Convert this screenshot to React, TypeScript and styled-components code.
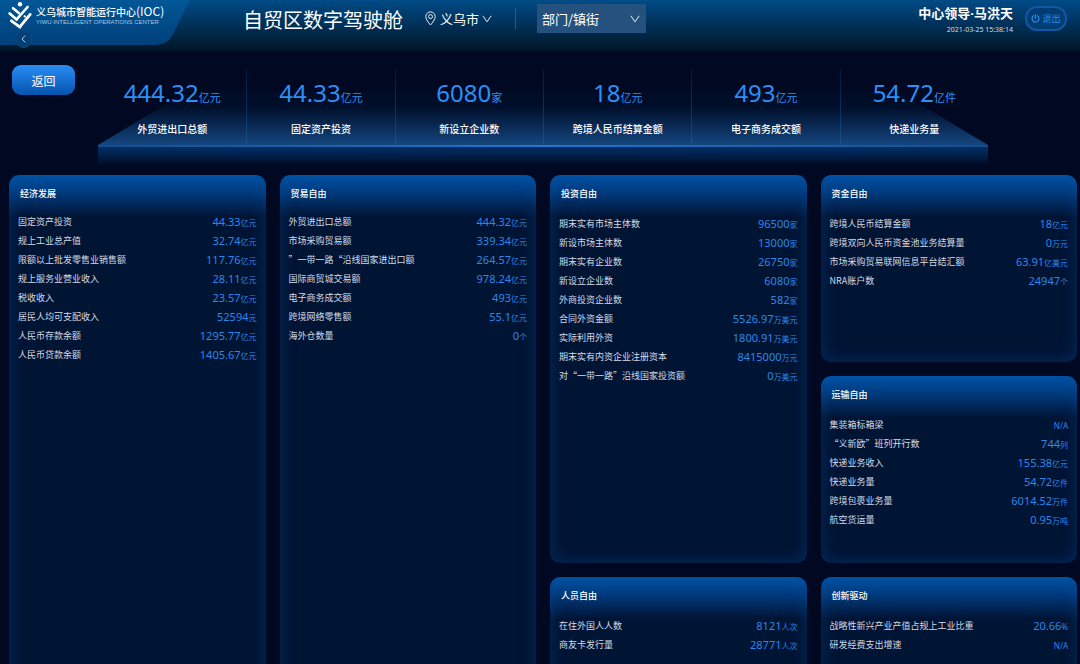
import React from 'react';
import styled, { createGlobalStyle, css } from 'styled-components';

const cjk = '"Noto Sans CJK SC", "Noto Sans", sans-serif';
const digits = '"Noto Sans", "Noto Sans CJK SC", sans-serif';

const GlobalStyle = createGlobalStyle`
  *, *::before, *::after { box-sizing: border-box; }
  body { margin: 0; background: #000822; color: #fff; font-family: ${cjk}; }
  h1, h2, p, dl, dd, dt { margin: 0; font-weight: 400; }
  button, select { font-family: inherit; color: inherit; }
`;

const Page = styled.div`
  height: 100vh;
  overflow: hidden;
  display: flex;
  flex-direction: column;
`;

const Header = styled.header`
  flex: none;
  height: 51px;
  display: flex;
  align-items: flex-start;
  padding-right: 13px;
  background: linear-gradient(#004b86, #003057 50%, #001626);
`;

const Brand = styled.div`
  position: relative;
  flex: none;
  width: 190px;
  height: 51px;
  margin-right: 53px;
`;

const BrandTab = styled.div`
  display: flex;
  align-items: flex-start;
  gap: 4px;
  height: 45px;
  padding: 2px 0 0 8px;
  background: linear-gradient(#005797, #00407a);
  clip-path: path('M0 0H190L173 34Q168 45 156 45H0Z');
`;

const BrandText = styled.div`
  padding-top: 2px;
  white-space: nowrap;
`;

const BrandName = styled.p`
  font-size: 10px;
  font-weight: 500;
  line-height: 14px;
  span { font-size: 12px; font-weight: 400; }
`;

const BrandSub = styled.p`
  font-family: "Liberation Sans", sans-serif;
  font-size: 6px;
  line-height: 7px;
  color: #a9c6e2;
`;

const CollapseButton = styled.button`
  position: absolute;
  left: 15px;
  top: 30px;
  width: 17px;
  height: 18px;
  padding: 0;
  display: grid;
  place-items: center;
  border: 1px solid #0a4c86;
  border-radius: 50%;
  background: #043f76;
`;

const Title = styled.h1`
  flex: none;
  font-size: 20px;
  line-height: 40px;
  margin-right: 22px;
`;

const Location = styled.label`
  display: flex;
  align-items: center;
  gap: 4px;
  height: 37px;
`;

const SelectWrap = styled.span<{ $filled?: boolean }>`
  display: flex;
  align-items: center;
  position: relative;
  width: ${(p) => (p.$filled ? '109px' : '52px')};
  height: 29px;
  margin-top: ${(p) => (p.$filled ? '4px' : '0')};
  ${(p) => p.$filled && css`background: #25517f;`}
  svg {
    position: absolute;
    right: ${(p) => (p.$filled ? '6px' : '0')};
    pointer-events: none;
  }
`;

const Select = styled.select<{ $filled?: boolean }>`
  appearance: none;
  width: 100%;
  height: 100%;
  padding: 0 0 0 ${(p) => (p.$filled ? '5px' : '0')};
  border: 0;
  background: transparent;
  font-size: 13px;
  option { color: #000; }
`;

const Divider = styled.span`
  width: 1px;
  height: 21px;
  margin: 8px 21px 0 23px;
  background: #2b587f;
`;

const User = styled.div`
  margin-left: auto;
  padding-top: 4px;
  text-align: right;
  white-space: nowrap;
`;

const UserName = styled.p`
  font-family: ${digits};
  font-size: 13px;
  font-weight: 700;
  line-height: 19px;
`;

const Clock = styled.time`
  display: block;
  font-family: ${digits};
  font-size: 7px;
  line-height: 14px;
  color: #d3dfea;
`;

const LogoutButton = styled.button`
  display: flex;
  align-items: center;
  justify-content: center;
  gap: 2px;
  width: 42px;
  height: 25px;
  margin: 6px 0 0 12px;
  padding: 0;
  border: 2px solid #1157a4;
  border-radius: 12px;
  background: #003d73;
  color: #2b8cf0;
  font-size: 9px;
`;

const Summary = styled.section`
  flex: none;
  display: flex;
  align-items: flex-start;
  height: 124px;
  padding: 14px 92px 0 12px;
`;

const ReturnButton = styled.button`
  flex: none;
  width: 63px;
  height: 30px;
  margin-right: 23px;
  padding: 0;
  border: 0;
  border-radius: 9px;
  background: linear-gradient(#2a8df5, #0453ae);
  font-size: 12px;
`;

const Stage = styled.div`
  flex: 1;
  padding-top: 4px;
`;

const Deck = styled.div`
  position: relative;
  height: 76px;
  &::before {
    content: '';
    position: absolute;
    inset: 22px 0 0;
    background: linear-gradient(#000c26, #000f2b 30%, #0a2c58 68%, #15477f);
    clip-path: polygon(90px 0, calc(100% - 90px) 0, 100% 100%, 0 100%);
  }
`;

const Metrics = styled.dl`
  position: relative;
  display: grid;
  grid-template-columns: repeat(6, 1fr);
`;

const Metric = styled.div`
  display: flex;
  flex-direction: column-reverse;
  justify-content: flex-end;
  height: 74px;
  text-align: center;
  & + & {
    border-left: 1px solid;
    border-image: linear-gradient(#04193a, #0a3263 60%, #1c5594) 1;
  }
`;

const MetricValue = styled.dd`
  height: 48px;
  font-family: ${digits};
  font-size: 24px;
  line-height: 48px;
  color: #2d8ff5;
  span { font-size: 11px; }
`;

const MetricLabel = styled.dt`
  font-size: 10px;
  font-weight: 500;
  line-height: 24px;
`;

const DeckEdge = styled.div`
  height: 19px;
  border-top: 2px solid;
  border-image: linear-gradient(90deg, #134d90, #2a73c8 50%, #134d90) 1;
  background: linear-gradient(#002f66, #000e2a);
`;

const Board = styled.main`
  flex: none;
  display: grid;
  grid-template-columns: repeat(4, 1fr);
  grid-auto-flow: column;
  grid-template-rows: repeat(3, 187px);
  gap: 14px;
  padding: 0 3px 0 9px;
`;

const Panel = styled.section<{ $span: number }>`
  grid-row: span ${(p) => p.$span};
  padding: 9px 9px 0;
  border-radius: 10px;
  background: linear-gradient(#0052a6, #003a7c 18px, #001434 42px, #001434);
  box-shadow: inset 0 0 16px rgba(0, 82, 160, 0.4);
`;

const PanelTitle = styled.h2<{ $tight: boolean }>`
  padding-left: 2px;
  margin-bottom: ${(p) => (p.$tight ? '8px' : '10px')};
  font-size: 9px;
  font-weight: 500;
  line-height: 20px;
`;

const Row = styled.div`
  display: flex;
  justify-content: space-between;
  height: 19px;
  line-height: 19px;
`;

const RowLabel = styled.dt`
  font-size: 9px;
  color: #d3dbe7;
`;

const RowValue = styled.dd`
  font-family: ${digits};
  font-size: 11px;
  color: #2d87e8;
  span { font-size: 8px; }
`;

type Item = [label: string, value: string, unit: string];

const metrics: Item[] = [
  ['外贸进出口总额', '444.32', '亿元'],
  ['固定资产投资', '44.33', '亿元'],
  ['新设立企业数', '6080', '家'],
  ['跨境人民币结算金额', '18', '亿元'],
  ['电子商务成交额', '493', '亿元'],
  ['快递业务量', '54.72', '亿件'],
];

const panels: { title: string; span: number; items: Item[] }[] = [
  {
    title: '经济发展',
    span: 3,
    items: [
      ['固定资产投资', '44.33', '亿元'],
      ['规上工业总产值', '32.74', '亿元'],
      ['限额以上批发零售业销售额', '117.76', '亿元'],
      ['规上服务业营业收入', '28.11', '亿元'],
      ['税收收入', '23.57', '亿元'],
      ['居民人均可支配收入', '52594', '元'],
      ['人民币存款余额', '1295.77', '亿元'],
      ['人民币贷款余额', '1405.67', '亿元'],
    ],
  },
  {
    title: '贸易自由',
    span: 3,
    items: [
      ['外贸进出口总额', '444.32', '亿元'],
      ['市场采购贸易额', '339.34', '亿元'],
      ['”一带一路“沿线国家进出口额', '264.57', '亿元'],
      ['国际商贸城交易额', '978.24', '亿元'],
      ['电子商务成交额', '493', '亿元'],
      ['跨境网络零售额', '55.1', '亿元'],
      ['海外仓数量', '0', '个'],
    ],
  },
  {
    title: '投资自由',
    span: 2,
    items: [
      ['期末实有市场主体数', '96500', '家'],
      ['新设市场主体数', '13000', '家'],
      ['期末实有企业数', '26750', '家'],
      ['新设立企业数', '6080', '家'],
      ['外商投资企业数', '582', '家'],
      ['合同外资金额', '5526.97', '万美元'],
      ['实际利用外资', '1800.91', '万美元'],
      ['期末实有内资企业注册资本', '8415000', '万元'],
      ['对“一带一路”沿线国家投资额', '0', '万美元'],
    ],
  },
  {
    title: '人员自由',
    span: 1,
    items: [
      ['在住外国人人数', '8121', '人次'],
      ['商友卡发行量', '28771', '人次'],
    ],
  },
  {
    title: '资金自由',
    span: 1,
    items: [
      ['跨境人民币结算金额', '18', '亿元'],
      ['跨境双向人民币资金池业务结算量', '0', '万元'],
      ['市场采购贸易联网信息平台结汇额', '63.91', '亿美元'],
      ['NRA账户数', '24947', '个'],
    ],
  },
  {
    title: '运输自由',
    span: 1,
    items: [
      ['集装箱标箱梁', '', 'N/A'],
      ['“义新欧”班列开行数', '744', '列'],
      ['快递业务收入', '155.38', '亿元'],
      ['快递业务量', '54.72', '亿件'],
      ['跨境包裹业务量', '6014.52', '万件'],
      ['航空货运量', '0.95', '万吨'],
    ],
  },
  {
    title: '创新驱动',
    span: 1,
    items: [
      ['战略性新兴产业产值占规上工业比重', '20.66', '%'],
      ['研发经费支出增速', '', 'N/A'],
    ],
  },
];

const Logo = () => (
  <svg width="24" height="28" viewBox="0 0 24 28" fill="none" stroke="#fff" strokeLinecap="round" aria-hidden="true">
    <circle cx="12" cy="2.2" r="2.2" fill="#fff" stroke="none" />
    <path d="M5 6.2L10.8 11" strokeWidth="2.6" />
    <path d="M19.6 5L8.6 17.4" strokeWidth="2.6" />
    <path d="M1.7 11.4L8.6 17.4" strokeWidth="2.6" />
    <path d="M22.2 12.4L12 24.6" strokeWidth="2.8" />
    <path d="M3.4 18.8L12 25.2" strokeWidth="2.8" />
    <circle cx="16.8" cy="14.4" r="1.2" fill="#fff" stroke="none" />
  </svg>
);

const Chevron = () => (
  <svg width="10" height="8" viewBox="0 0 10 8" fill="none" stroke="#e6eef6" strokeWidth="1" aria-hidden="true">
    <path d="M0.8 0.8L5 6.8L9.2 0.8" />
  </svg>
);

const Pin = () => (
  <svg width="11" height="15" viewBox="0 0 11 15" fill="none" stroke="#e6eef6" strokeWidth="1" aria-hidden="true">
    <path d="M5.5 14C3.6 11.6.8 8.6.8 5.6a4.7 4.7 0 0 1 9.4 0C10.2 8.6 7.4 11.6 5.5 14Z" />
    <circle cx="5.5" cy="5.6" r="2" />
  </svg>
);

const Power = () => (
  <svg width="9" height="9" viewBox="0 0 9 9" fill="none" stroke="currentColor" strokeWidth="1.2" strokeLinecap="round" aria-hidden="true">
    <path d="M4.5 .8V4.3M2.5 1.7a3.5 3.5 0 1 0 4 0" />
  </svg>
);

export default function App() {
  return (
    <Page>
      <GlobalStyle />
      <Header>
        <Brand>
          <BrandTab>
            <Logo />
            <BrandText>
              <BrandName>义乌城市智能运行中心<span>(IOC)</span></BrandName>
              <BrandSub>YIWU INTELLIGENT OPERATIONS CENTER</BrandSub>
            </BrandText>
          </BrandTab>
          <CollapseButton aria-label="收起">
            <svg width="5" height="8" viewBox="0 0 5 8" fill="none" stroke="#b9cfe4" aria-hidden="true">
              <path d="M4.2 .6L1 4L4.2 7.4" />
            </svg>
          </CollapseButton>
        </Brand>
        <Title>自贸区数字驾驶舱</Title>
        <Location>
          <Pin />
          <SelectWrap>
            <Select aria-label="城市"><option>义乌市</option></Select>
            <Chevron />
          </SelectWrap>
        </Location>
        <Divider />
        <SelectWrap $filled>
          <Select $filled aria-label="部门或镇街"><option>部门/镇街</option></Select>
          <Chevron />
        </SelectWrap>
        <User>
          <UserName>中心领导·马洪天</UserName>
          <Clock>2021-03-25 15:38:14</Clock>
        </User>
        <LogoutButton><Power />退出</LogoutButton>
      </Header>
      <Summary>
        <ReturnButton>返回</ReturnButton>
        <Stage>
          <Deck>
            <Metrics>
              {metrics.map(([label, value, unit]) => (
                <Metric key={label}>
                  <MetricLabel>{label}</MetricLabel>
                  <MetricValue>{value}<span>{unit}</span></MetricValue>
                </Metric>
              ))}
            </Metrics>
          </Deck>
          <DeckEdge />
        </Stage>
      </Summary>
      <Board>
        {panels.map(({ title, span, items }) => (
          <Panel key={title} $span={span}>
            <PanelTitle $tight={span === 3}>{title}</PanelTitle>
            <dl>
              {items.map(([label, value, unit]) => (
                <Row key={label}>
                  <RowLabel>{label}</RowLabel>
                  <RowValue>{value}<span>{unit}</span></RowValue>
                </Row>
              ))}
            </dl>
          </Panel>
        ))}
      </Board>
    </Page>
  );
}
